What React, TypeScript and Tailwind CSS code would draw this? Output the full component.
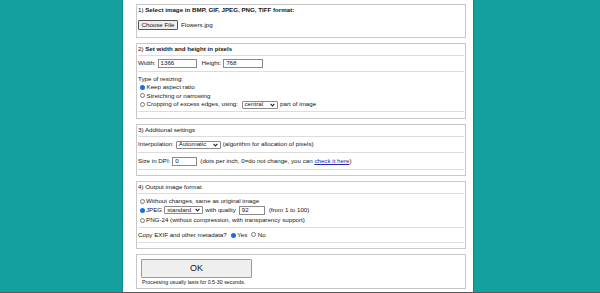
import React from "react";

const Radio = ({ checked }: { checked?: boolean }) =>
  checked ? (
    <span className="inline-flex items-center justify-center w-[5px] h-[5px] rounded-full bg-[#1a6fe0] shrink-0">
      <span className="w-[2px] h-[2px] rounded-full bg-[#1a6fe0]" />
    </span>
  ) : (
    <span className="inline-block w-[5px] h-[5px] rounded-full border border-[#7a7a7a] bg-white shrink-0" />
  );

const Input = ({ w, value }: { w: number; value: string }) => (
  <span
    className="inline-flex items-center h-[9px] border border-[#8a8a8a] bg-white pl-[2px] shrink-0 leading-none"
    style={{ width: w }}
  >
    {value}
  </span>
);

const Select = ({ w, value }: { w: number; value: string }) => (
  <span
    className="inline-flex items-center justify-between h-[8px] border border-[#8a8a8a] rounded-[1px] bg-white pl-[2px] pr-[2px] shrink-0 leading-none"
    style={{ width: w }}
  >
    <span>{value}</span>
    <svg width="5" height="4" viewBox="0 0 5 4">
      <polyline points="0.6,0.8 2.5,2.9 4.4,0.8" fill="none" stroke="#222" strokeWidth="1.1" />
    </svg>
  </span>
);

const Sep = () => <div className="h-px bg-[#dcdcdc] mx-[1px]" />;

export default function App() {
  return (
    <div
      className="w-[600px] h-[293px] bg-[#15a0a0] flex flex-col overflow-hidden text-[#151515] text-[6.2px] leading-none"
      style={{ fontFamily: '"Liberation Sans", Arial, sans-serif' }}
    >
      <div className="flex-1 flex">
        <div className="ml-[122px] w-[352px] bg-white border-x border-[#0f8a8a] pl-[13px] flex flex-col">
          {/* Box 1 */}
          <div className="mt-[4px] w-[330px] h-[34px] border border-[#c8c8c8] flex flex-col px-[1px]">
            <div className="h-[11px] flex items-center">
              <span>1)&nbsp;</span>
              <span className="font-bold">Select image in BMP, GIF, JPEG, PNG, TIFF format:</span>
            </div>
            <div className="mt-[4px] h-[10px] flex items-center gap-[3px]">
              <span className="h-[10px] w-[40px] border border-[#555] bg-[#efefef] rounded-[1px] flex items-center justify-center">
                Choose File
              </span>
              <span>Flowers.jpg</span>
            </div>
          </div>

          {/* Box 2 */}
          <div className="mt-[5px] w-[330px] h-[76px] border border-[#c8c8c8] flex flex-col">
            <div className="h-[11px] flex items-center px-[1px]">
              <span>2)&nbsp;</span>
              <span className="font-bold">Set width and height in pixels</span>
            </div>
            <Sep />
            <div className="h-[15px] flex items-center px-[1px]">
              <span>Width:</span>
              <span className="ml-[2px]"><Input w={39} value="1366" /></span>
              <span className="ml-[5px]">Height:</span>
              <span className="ml-[2px]"><Input w={40} value="768" /></span>
            </div>
            <Sep />
            <div className="h-[39px] flex flex-col pt-[3px]">
              <div className="h-[8px] flex items-center px-[1px]">Type of resizing:</div>
              <div className="h-[8.5px] flex items-center pl-[3px] gap-[1.5px]">
                <Radio checked />
                <span>Keep aspect ratio</span>
              </div>
              <div className="h-[8.5px] flex items-center pl-[3px] gap-[1.5px]">
                <Radio />
                <span>Stretching or narrowing</span>
              </div>
              <div className="h-[9px] flex items-center pl-[3px] gap-[1.5px]">
                <Radio />
                <span>Cropping of excess edges, using:</span>
                <span className="ml-[2px]"><Select w={36} value="central" /></span>
                <span className="ml-[1px]">part of image</span>
              </div>
            </div>
            <Sep />
          </div>

          {/* Box 3 */}
          <div className="mt-[5px] w-[330px] h-[52px] border border-[#c8c8c8] flex flex-col">
            <div className="h-[11px] flex items-center px-[1px]">3) Additional settings</div>
            <Sep />
            <div className="h-[15px] flex items-center px-[1px]">
              <span>Interpolation:</span>
              <span className="ml-[2px]"><Select w={45} value="Automatic" /></span>
              <span className="ml-[2px]">(algorithm for allocation of pixels)</span>
            </div>
            <Sep />
            <div className="h-[16px] flex items-center px-[1px]">
              <span>Size in DPI:</span>
              <span className="ml-[2px]"><Input w={25} value="0" /></span>
              <span className="ml-[3px]">
                (dots per inch, 0=do not change, you can{" "}
                <span className="text-[#2424b8] underline">check it here</span>)
              </span>
            </div>
            <Sep />
          </div>

          {/* Box 4 */}
          <div className="mt-[5px] w-[330px] h-[68px] border border-[#c8c8c8] flex flex-col">
            <div className="h-[11px] flex items-center px-[1px]">4) Output image format</div>
            <Sep />
            <div className="h-[33px] flex flex-col pt-[3px]">
              <div className="h-[8px] flex items-center pl-[3px] gap-[1px]">
                <Radio />
                <span>Without changes, same as original image</span>
              </div>
              <div className="h-[10px] flex items-center pl-[3px] gap-[1px]">
                <Radio checked />
                <span>JPEG</span>
                <span className="ml-[1px]"><Select w={39} value="standard" /></span>
                <span className="ml-[1px]">with quality</span>
                <span className="ml-[2px]"><Input w={26} value="92" /></span>
                <span className="ml-[3px]">(from 1 to 100)</span>
              </div>
              <div className="h-[10px] flex items-center pl-[3px] gap-[1px]">
                <Radio />
                <span>PNG-24 (without compression, with transparency support)</span>
              </div>
            </div>
            <Sep />
            <div className="h-[14px] flex items-center px-[1px]">
              <span>Copy EXIF and other metadata?</span>
              <span className="ml-[4px]"><Radio checked /></span>
              <span className="ml-[1.5px]">Yes</span>
              <span className="ml-[4px]"><Radio /></span>
              <span className="ml-[1.5px]">No</span>
            </div>
            <Sep />
          </div>

          {/* Box 5 */}
          <div className="mt-[5px] w-[330px] h-[35px] border border-[#c8c8c8] flex flex-col pl-[4px]">
            <div className="mt-[4px] w-[111px] h-[19px] border border-[#9a9a9a] bg-[#efefef] rounded-[1px] flex items-center justify-center text-[9px]">
              OK
            </div>
            <div className="h-[10px] flex items-center text-[5.3px] pl-[1px]">
              Processing usually lasts for 0.5-30 seconds.
            </div>
          </div>
        </div>
      </div>
      <div className="h-px bg-[#5a5a5a]" />
    </div>
  );
}
